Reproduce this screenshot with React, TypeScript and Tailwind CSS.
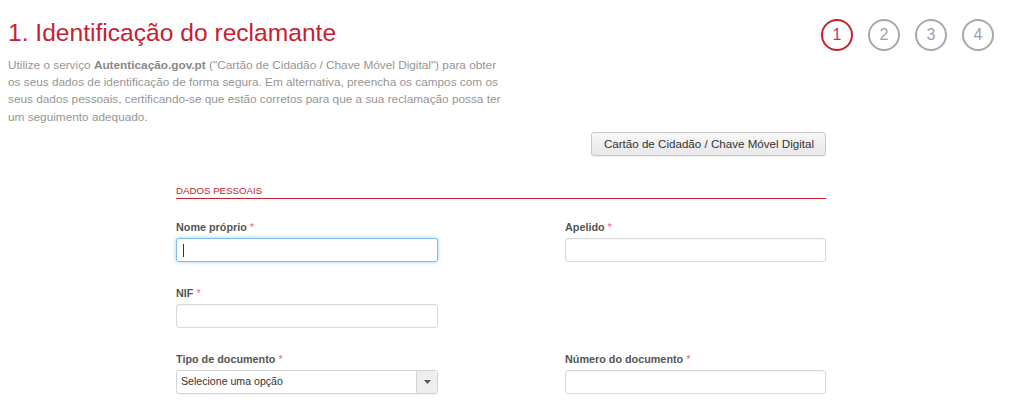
import React from "react";

function Label({ text }: { text: string }) {
  return (
    <div className="text-[10.8px] leading-[14px] font-bold text-[#555] mb-1">
      {text}
      <span className="text-[#e46a6a] font-normal ml-[3px]">*</span>
    </div>
  );
}

function TextInput({ focused = false }: { focused?: boolean }) {
  return (
    <div
      className={
        focused
          ? "relative h-[24px] w-full rounded-[3px] border border-[#7fbcec] bg-white shadow-[0_0_4px_rgba(102,175,233,0.6)]"
          : "relative h-[24px] w-full rounded-[3px] border border-[#d9d9d9] bg-white shadow-[inset_0_1px_1px_rgba(0,0,0,0.04)]"
      }
    >
      {focused && (
        <span className="absolute left-[6px] top-[5px] h-[13px] w-px bg-[#333]" />
      )}
    </div>
  );
}

function SelectBox() {
  return (
    <div className="flex h-[24px] w-full items-stretch rounded-[3px] border border-[#d4d4d4] bg-white shadow-[0_1px_1px_rgba(0,0,0,0.05)]">
      <div className="flex flex-1 items-center pl-[4px] text-[10.6px] text-[#333]">
        Selecione uma opção
      </div>
      <div className="flex w-[21px] items-center justify-center border-l border-[#d4d4d4] bg-[#eeeeee]">
        <svg width="7" height="4" viewBox="0 0 7 4">
          <polygon points="0,0 7,0 3.5,4" fill="#555" />
        </svg>
      </div>
    </div>
  );
}

function Step({ n, active = false }: { n: number; active?: boolean }) {
  return (
    <div
      className={
        active
          ? "flex h-[32px] w-[32px] items-center justify-center rounded-full border-2 border-[#c8202f] text-[16px] text-[#b83a5a]"
          : "flex h-[32px] w-[32px] items-center justify-center rounded-full border-2 border-[#a8a8a8] text-[16px] text-[#9aa0b0]"
      }
    >
      {n}
    </div>
  );
}

export default function App() {
  return (
    <div className="h-[412px] w-full overflow-hidden bg-white font-['Liberation_Sans',Arial,sans-serif]">
      <div className="flex items-start justify-between">
        <div className="pl-[8px] pt-[19px]">
          <h1 className="text-[24.6px] leading-[28px] font-normal text-[#c8202f]">
            1. Identificação do reclamante
          </h1>
          <p className="mt-[10px] w-[520px] text-[11.8px] leading-[17.2px] text-[#959595]">
            Utilize o serviço{" "}
            <span className="font-bold text-[#888]">Autenticação.gov.pt</span>{" "}
            ("Cartão de Cidadão / Chave Móvel Digital") para obter
            <br />
            os seus dados de identificação de forma segura. Em alternativa, preencha
            os campos com os
            <br />
            seus dados pessoais, certificando-se que estão corretos para que a sua
            reclamação possa ter
            <br />
            um seguimento adequado.
          </p>
        </div>
        <div className="flex gap-[15px] pr-[30px] pt-[19px]">
          <Step n={1} active />
          <Step n={2} />
          <Step n={3} />
          <Step n={4} />
        </div>
      </div>

      <div className="ml-[176px] w-[650px]">
        <div className="mt-[6px] flex justify-end">
          <button className="h-[24px] rounded-[3px] border border-[#c8c8c8] bg-gradient-to-b from-[#f7f7f7] to-[#e8e8e8] pl-[12px] pr-[11px] text-[11.6px] text-[#333] shadow-[0_1px_1px_rgba(0,0,0,0.08)]">
            Cartão de Cidadão / Chave Móvel Digital
          </button>
        </div>

        <div className="mt-[29px] text-[9.7px] leading-[12px] text-[#c8202f]">
          DADOS PESSOAIS
        </div>
        <div className="mt-px h-px w-full bg-[#c8202f]" />

        <div className="mt-[21px] grid grid-cols-[262px_261px] justify-between gap-y-[24px]">
          <div>
            <Label text="Nome próprio" />
            <TextInput focused />
          </div>
          <div>
            <Label text="Apelido" />
            <TextInput />
          </div>
          <div>
            <Label text="NIF" />
            <TextInput />
          </div>
          <div />
          <div>
            <Label text="Tipo de documento" />
            <SelectBox />
          </div>
          <div>
            <Label text="Número do documento" />
            <TextInput />
          </div>
        </div>
      </div>
    </div>
  );
}
